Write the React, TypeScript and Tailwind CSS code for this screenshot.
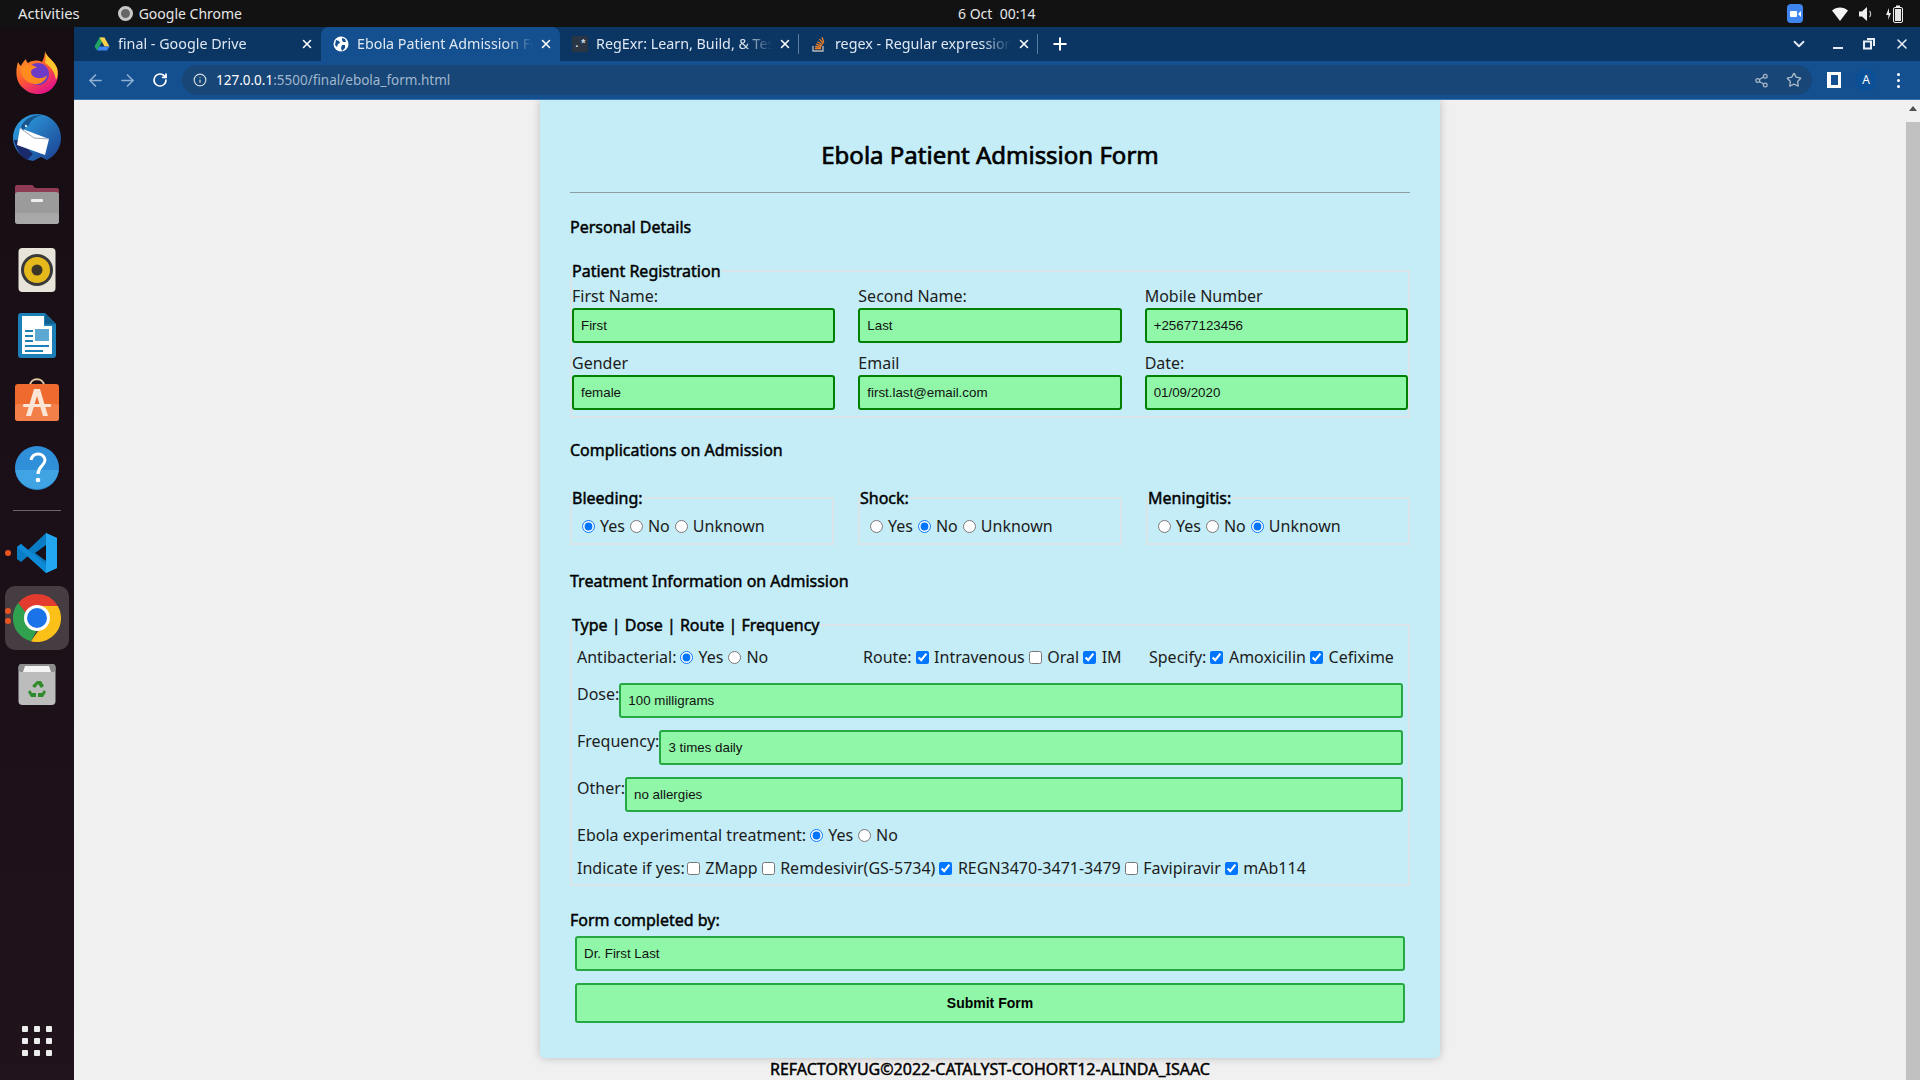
import React from "react";
import { ArrowLeft, ArrowRight, ChevronDown, Info, Plus, RotateCw, Share2, Star, X } from "lucide-react";

const greenInput =
  "box-border h-[35px] min-w-0 rounded-[3px] border-2 border-[#008000] bg-[#8ff7a7] px-[7px] font-['Liberation_Sans',sans-serif] text-[13.33px] text-[#111] outline-none";
const mintInput =
  "box-border h-[35px] min-w-0 flex-1 rounded-[3px] border-2 border-[#28a745] bg-[#8ff7a7] px-[7px] font-['Liberation_Sans',sans-serif] text-[13.33px] text-[#111] outline-none";
// the page's headings render as a thickened regular weight
const heading = "leading-[24px] text-black [-webkit-text-stroke:0.45px_#000]";

function Firefox() {
  return (
    <svg width="44" height="44" viewBox="0 0 44 44">
      <defs>
        <linearGradient id="ff" x1="0" y1="0" x2="0.6" y2="1">
          <stop offset="0" stopColor="#ffb020" />
          <stop offset="0.55" stopColor="#ff5a30" />
          <stop offset="1" stopColor="#e31587" />
        </linearGradient>
      </defs>
      <path d="M30 1c1 6 9 9 12 17 3 9-1 18-8 23-8 5-19 4-26-3C1 32 0 22 3 12c1 2 2 3 3 4 1-3 3-5 5-7 0 2 1 3 2 4 5-3 10-3 14-1 2-4 3-7 3-11z" fill="url(#ff)" />
      <path d="M30 1c1 6 9 9 12 17 1 4 1 8-1 12-1-8-5-13-11-17 1-4 1-8 0-12z" fill="#ffc52e" />
      <circle cx="23" cy="24" r="11" fill="#6e3bc6" />
      <path d="M6 17c5-4 12-3 16 1-4 0-6 2-6 4 0 4 5 7 10 6 3 0 5-2 6-3-1 6-7 10-13 9C11 33 4 25 6 17z" fill="#ff8a20" />
    </svg>
  );
}

function Thunderbird() {
  return (
    <svg width="48" height="48" viewBox="0 0 48 48">
      <defs>
        <linearGradient id="tb" x1="0" y1="0" x2="1" y2="1">
          <stop offset="0" stopColor="#2fa8e6" />
          <stop offset="1" stopColor="#1b3d8f" />
        </linearGradient>
      </defs>
      <path d="M24 0a24 24 0 0 1 24 24c0 10-6 18-14 22l-6-3-8 4C9 45 0 35 0 24 0 11 11 0 24 0z" fill="url(#tb)" />
      <path d="M1 26c2 10 8 17 13 20l6-6-14-14z" fill="#1a2a6c" />
      <path d="M7 14 L36 25 L32 41 L4 31 Z" fill="#ffffff" />
      <path d="M7 14 L21 24 L36 25" fill="none" stroke="#9aa6b8" strokeWidth="1" />
      <path d="M8 13c3-8 11-12 21-12-7 2-11 5-13 10l-6 5z" fill="#17558f" />
      <circle cx="13" cy="12" r="1.2" fill="#d7e6f5" />
    </svg>
  );
}

function Files() {
  return (
    <svg width="44" height="42" viewBox="0 0 44 42">
      <path d="M0 5a3 3 0 0 1 3-3h14l3 3h21a3 3 0 0 1 3 3v10H0z" fill="#b1433f" />
      <path d="M0 5a3 3 0 0 1 3-3h14l3 3h21a3 3 0 0 1 3 3v2H0z" fill="#8e3b54" />
      <rect x="0" y="9" width="44" height="32" rx="3" fill="#9b9b9b" />
      <rect x="0" y="30" width="44" height="11" rx="3" fill="#a8a8a8" />
      <rect x="16" y="16" width="12" height="3" rx="1" fill="#efefef" />
    </svg>
  );
}

function Rhythmbox() {
  return (
    <svg width="38" height="44" viewBox="0 0 38 44">
      <rect x="0.5" y="0" width="37" height="44" rx="4" fill="#e8e4da" />
      <circle cx="19" cy="22" r="16" fill="#3a3a3a" />
      <circle cx="19" cy="22" r="13" fill="#e5b81c" />
      <circle cx="19" cy="22" r="5.5" fill="#3c3628" />
    </svg>
  );
}

function Writer() {
  return (
    <svg width="38" height="46" viewBox="0 0 38 46">
      <path d="M3 0h24l11 11v31a3 3 0 0 1-3 3H3a3 3 0 0 1-3-3V3a3 3 0 0 1 3-3z" fill="#1d7fb8" />
      <path d="M4 3h22v10h8v28H4z" fill="#ffffff" />
      <path d="M27 0l11 11H27z" fill="#12608f" />
      <rect x="7" y="17" width="8" height="2" fill="#1d7fb8" />
      <rect x="7" y="22" width="8" height="2" fill="#1d7fb8" />
      <rect x="7" y="27" width="8" height="2" fill="#1d7fb8" />
      <rect x="17" y="16" width="14" height="12" fill="#5da7d3" />
      <rect x="7" y="32" width="24" height="2" fill="#1d7fb8" />
      <rect x="7" y="37" width="18" height="2" fill="#1d7fb8" />
    </svg>
  );
}

function AppStore() {
  return (
    <svg width="44" height="44" viewBox="0 0 44 44">
      <path d="M15 8c0-9 14-9 14 0" fill="none" stroke="#e7c9a4" strokeWidth="2" />
      <rect x="0" y="6" width="44" height="37" rx="3" fill="#ef6a2e" />
      <rect x="0" y="26" width="44" height="17" rx="3" fill="#f38048" />
      <path d="M19 11h6l8 27h-5l-6-20-6 20h-5z" fill="#fbe5d6" />
      <rect x="8" y="26" width="28" height="3" rx="1" fill="#fbe5d6" />
    </svg>
  );
}

function Help() {
  return (
    <svg width="44" height="44" viewBox="0 0 44 44">
      <circle cx="22" cy="22" r="22" fill="#2f8fd9" />
      <path d="M0.2 24h43.6A22 22 0 0 1 0.2 24z" fill="#3fa3e4" />
      <path d="M16 14c1-4 4-6 7-6 4 0 7 3 7 6 0 6-7 6-7 14" fill="none" stroke="#fff" strokeWidth="3" />
      <circle cx="23" cy="34" r="2.3" fill="#fff" />
    </svg>
  );
}

function VsCode() {
  return (
    <svg width="42" height="42" viewBox="0 0 42 42">
      <path d="M30 1 L41 6 V36 L30 41 L12 24 L5 30 L1 27 V15 L5 12 L12 18 Z" fill="#0a7cc4" />
      <path d="M30 1 L41 6 V36 L30 41 Z" fill="#22a7f0" />
      <path d="M1 15 L5 12 L30 33 V41 Z" fill="#0f8ad6" />
      <path d="M30 13 L19 21 L30 29 Z" fill="#171018" />
    </svg>
  );
}

function ChromeLogo({ size = 48 }: { size?: number }) {
  return (
    <svg width={size} height={size} viewBox="0 0 48 48">
      <path d="M24 0a24 24 0 0 1 20.8 12H24a12 12 0 0 0-11 7L5.2 9A24 24 0 0 1 24 0z" fill="#e33b2e" />
      <path d="M5.2 9 13 19a12 12 0 0 0 11 17l-6 11.3A24 24 0 0 1 5.2 9z" fill="#2fa14f" />
      <path d="M44.8 12A24 24 0 0 1 18 47.3L30 30a12 12 0 0 0-6-18z" fill="#fcc119" />
      <circle cx="24" cy="24" r="13" fill="#fff" />
      <circle cx="24" cy="24" r="10" fill="#1a73e8" />
    </svg>
  );
}

function Trash() {
  return (
    <svg width="38" height="42" viewBox="0 0 38 42">
      <rect x="0.5" y="0" width="37" height="41" rx="4" fill="#bcbcbc" />
      <rect x="0.5" y="0" width="37" height="8" rx="3" fill="#8d8d8d" />
      <path d="M5 8l2-6h24l2 6z" fill="#f4f4f4" />
      <path d="M19 17l4 0 3 5-3 2-3-4-3 4-3-2zM12 26l2 3h4v4h-5l-3-5zM26 26l2 2-3 5h-5v-4h4z" fill="#2f8a2a" />
    </svg>
  );
}

function DriveIcon() {
  return (
    <svg width="16" height="16" viewBox="0 0 16 16">
      <path d="M5.5 1.5h5L8 6 5.5 10.5 3 14.5 0.5 10.5z" fill="#1fa463" />
      <path d="M5.5 1.5h5l5 9h-5z" fill="#ffd04b" />
      <path d="M3 14.5l2.5-4h10l-2.5 4z" fill="#4285f4" />
    </svg>
  );
}

function GlobeIcon() {
  return (
    <svg width="16" height="16" viewBox="0 0 16 16">
      <circle cx="8" cy="8" r="7.5" fill="#fff" />
      <path d="M3 4l3 1 1 2-2 1-1 3-2-2zM9 2l3 1 1 3-3 0-1-2zM9 9l3 0 0 3-3 3-1-3z" fill="#14508f" />
    </svg>
  );
}

function RegexIcon() {
  return (
    <div className="flex h-[16px] w-[16px] items-center justify-center bg-[#2a3644] font-['Liberation_Mono',monospace] text-[11px] font-bold leading-none text-[#d5dde6]">
      .*
    </div>
  );
}

function StackIcon() {
  return (
    <svg width="16" height="16" viewBox="0 0 16 16">
      <path d="M2 10v5h10v-5" fill="none" stroke="#bcbbbb" strokeWidth="1.3" />
      <path d="M4 12.5h6M4.2 10.5l6 .6M5 8.2l5.8 1.6M6.3 5.8l5.2 3M8.5 3.2l3.8 4.4M11 1.2l1.8 5.4" stroke="#f48024" strokeWidth="1.3" fill="none" />
    </svg>
  );
}

type TabProps = {
  icon: React.ReactNode;
  title: string;
  active?: boolean;
  divider?: boolean;
};

function Tab({ icon, title, active, divider }: TabProps) {
  return (
    <div
      className={
        active
          ? "flex h-[34px] w-[239px] items-center rounded-t-[8px] bg-[#14508f] pl-[12px] pr-[7px]"
          : "relative flex h-[34px] w-[239px] items-center pl-[12px] pr-[7px]"
      }
    >
      <div className="flex h-[16px] w-[16px] shrink-0 items-center justify-center">{icon}</div>
      <div className="ml-[8px] min-w-0 flex-1 overflow-hidden whitespace-nowrap text-[14.3px] text-[#dfe8f2] [mask-image:linear-gradient(to_right,black_84%,transparent)]">
        {title}
      </div>
      <X size={14} strokeWidth={2.6} className="ml-[6px] shrink-0 text-white" />
      {divider && <div className="absolute right-0 top-[7px] h-[20px] w-px bg-[#5c7c9f]" />}
    </div>
  );
}

function Radio({ label, checked, name }: { label: string; checked?: boolean; name: string }) {
  return (
    <label className="flex items-center">
      <input type="radio" name={name} defaultChecked={checked} className="ml-[5px] mr-[5px]" />
      <span>{label}</span>
    </label>
  );
}

function Check({ label, checked }: { label: string; checked?: boolean }) {
  return (
    <label className="flex items-center">
      <input type="checkbox" defaultChecked={checked} className="ml-[4px] mr-[5.5px]" />
      <span>{label}</span>
    </label>
  );
}

function Field({ label, value }: { label: string; value: string }) {
  return (
    <div className="flex flex-col">
      <label className="leading-[23px]">{label}</label>
      <input readOnly defaultValue={value} className={greenInput} />
    </div>
  );
}

function Complication({ title, name, value }: { title: string; name: string; value: string }) {
  return (
    <fieldset className="border-2 border-[#d8e4e8] pb-[5px] pt-[4px]">
      <legend className={heading}>{title}</legend>
      <div className="flex h-[24px] items-center pl-[5px]">
        <Radio name={name} label="Yes" checked={value === "Yes"} />
        <Radio name={name} label="No" checked={value === "No"} />
        <Radio name={name} label="Unknown" checked={value === "Unknown"} />
      </div>
    </fieldset>
  );
}

function InlineField({ label, value }: { label: string; value: string }) {
  return (
    <div className="flex items-start">
      <label className="-mt-[1px] leading-[24px]">{label}</label>
      <input readOnly defaultValue={value} className={mintInput} />
    </div>
  );
}

export default function App() {
  return (
    <div className="flex h-screen w-full flex-col overflow-hidden bg-[#f0f0f0] font-['Noto_Sans',sans-serif] text-[16px] text-[#1c1c1c]">
      {/* gnome top bar */}
      <div className="relative flex h-[27px] shrink-0 items-center bg-[#121212] pl-[18px] pr-[16px] text-[14px] text-[#e6e6e6]">
        <span className="text-[14.8px]">Activities</span>
        <div className="ml-[38px] h-[15px] w-[15px] rounded-full border-[3px] border-[#c9c9c9] bg-[#666]" />
        <span className="ml-[6px]">Google Chrome</span>
        <span className="absolute left-[958px] top-[3px]">6 Oct&nbsp;&nbsp;00:14</span>
        <div className="ml-auto flex items-center">
          <div className="flex h-[19px] w-[16px] items-center justify-center gap-px rounded-[4px] bg-[#3f85f0]">
            <div className="h-[6px] w-[7px] rounded-[1px] bg-white" />
            <div className="h-0 w-0 border-y-[3px] border-r-[3px] border-y-transparent border-r-white" />
          </div>
          <svg width="16" height="14" viewBox="0 0 16 14" className="ml-[29px]">
            <path d="M0 3.5C4.5-.5 11.5-.5 16 3.5L8 14z" fill="#f4f4f4" />
          </svg>
          <svg width="16" height="16" viewBox="0 0 16 16" className="ml-[10px]" fill="none">
            <path d="M1 5.5h3L9 1v14l-5-4.500H1z" fill="#ededed" />
            <path d="M11.500 5c1.500 1.500 1.500 4.500 0 6" stroke="#bdbdbd" strokeWidth="1.200" />
          </svg>
          <svg width="18" height="18" viewBox="0 0 18 18" className="ml-[12px]">
            <path d="M3 3L0 10h2.500L2 15l3-7H3z" fill="#eee" />
            <rect x="7.500" y="2.500" width="9" height="15" rx="1.500" fill="none" stroke="#eee" />
            <rect x="10" y="0.500" width="4" height="2" fill="#eee" />
            <rect x="9" y="4" width="6" height="12" fill="#e4e4e4" />
          </svg>
        </div>
      </div>

      <div className="flex min-h-0 flex-1">
        {/* dock */}
        <div className="relative flex w-[74px] shrink-0 flex-col items-center bg-gradient-to-b from-[#160d13] to-[#21131c] pt-[12px]">
          <div className="flex h-[66px] items-center justify-center"><Firefox /></div>
          <div className="flex h-[66px] items-center justify-center"><Thunderbird /></div>
          <div className="flex h-[66px] items-center justify-center"><Files /></div>
          <div className="flex h-[66px] items-center justify-center"><Rhythmbox /></div>
          <div className="flex h-[66px] items-center justify-center"><Writer /></div>
          <div className="flex h-[66px] items-center justify-center pb-[4px]"><AppStore /></div>
          <div className="flex h-[66px] items-center justify-center"><Help /></div>
          <div className="mt-[9px] h-px w-[48px] bg-[#6b6468]" />
          <div className="relative mt-[9px] flex h-[66px] w-full items-center justify-center">
            <div className="absolute left-[5px] top-[30px] h-[6px] w-[6px] rounded-full bg-[#e95420]" />
            <VsCode />
          </div>
          <div className="relative flex h-[64px] w-[64px] items-center justify-center rounded-[10px] bg-[#453d42]">
            <div className="absolute left-0 top-[22px] h-[6px] w-[6px] rounded-full bg-[#e95420]" />
            <div className="absolute left-0 top-[32px] h-[6px] w-[6px] rounded-full bg-[#e95420]" />
            <ChromeLogo />
          </div>
          <div className="mt-[2px] flex h-[66px] items-center justify-center"><Trash /></div>
          <div className="mt-auto mb-[24px] grid grid-cols-3 gap-x-[6px] gap-y-[6px]">
            {[1, 2, 3, 4, 5, 6, 7, 8, 9].map((n) => (
              <div key={n} className="h-[6px] w-[6px] rounded-[1px] bg-[#eeeeee]" />
            ))}
          </div>
        </div>

        <div className="flex min-w-0 flex-1 flex-col">
          {/* tab strip */}
          <div className="flex h-[34px] shrink-0 items-center bg-[#0b3563] pl-[8px]">
            <Tab icon={<DriveIcon />} title="final - Google Drive" />
            <Tab icon={<GlobeIcon />} title="Ebola Patient Admission Form" active />
            <Tab icon={<RegexIcon />} title="RegExr: Learn, Build, & Test RegEx" divider />
            <Tab icon={<StackIcon />} title="regex - Regular expression to match" divider />
            <Plus size={20} strokeWidth={2.4} className="ml-[12px] text-white" />
            <ChevronDown size={18} strokeWidth={2.4} className="ml-[720px] text-[#e6edf5]" />
            <div className="ml-[25px] mt-[8px] h-[2px] w-[10px] bg-[#e6edf5]" />
            <svg width="12" height="12" viewBox="0 0 12 12" className="ml-[20px]" fill="none" stroke="#e6edf5" strokeWidth="2">
              <rect x="1" y="3.500" width="7" height="7" />
              <path d="M4 1h7v7" />
            </svg>
            <X size={16} strokeWidth={2.4} className="ml-[19px] text-[#e6edf5]" />
          </div>

          {/* toolbar */}
          <div className="flex h-[39px] shrink-0 items-center border-b border-[#3b75ad] bg-[#14508f] pl-[12px] text-[#8fb0d2]">
            <ArrowLeft size={19} strokeWidth={2} />
            <ArrowRight size={19} strokeWidth={2} className="ml-[13px]" />
            <RotateCw size={16} strokeWidth={2.6} className="ml-[15px] text-white" />
            <div className="ml-[14px] flex h-[30px] w-[1630px] items-center rounded-full bg-[#184677] pl-[11px]">
              <Info size={14} className="text-[#d2dce6]" />
              <span className="ml-[9px] text-[13.5px] text-[#9fb6cd]">
                <span className="text-white">127.0.0.1</span>:5500/final/ebola_form.html
              </span>
              <Share2 size={15} className="ml-auto text-[#a8b8c8]" />
              <Star size={16} strokeWidth={2} className="ml-[17px] mr-[10px] text-[#a8b8c8]" />
            </div>
            <div className="ml-[15px] flex h-[16px] w-[14px] items-center justify-end border-[3px] border-white bg-white">
              <div className="h-full w-[7px] bg-[#14508f]" />
            </div>
            <div className="ml-[14px] flex h-[22px] w-[22px] items-center justify-center rounded-full bg-[#0b4f96] text-[12px] text-white">
              A
            </div>
            <div className="ml-[20px] flex flex-col gap-[3px]">
              <div className="h-[3px] w-[3px] rounded-full bg-white" />
              <div className="h-[3px] w-[3px] rounded-full bg-white" />
              <div className="h-[3px] w-[3px] rounded-full bg-white" />
            </div>
          </div>

          {/* page */}
          <div className="flex min-h-0 flex-1">
            <div className="min-w-0 flex-1 overflow-hidden">
              <div className="mx-auto box-border w-[900px] rounded-b-[5px] bg-[#c4edf7] px-[30px] pb-[35px] pt-[37px] shadow-[0_0_8px_rgba(0,0,0,0.22)]">
                <h1 className="text-center text-[24px] leading-[36px] text-black [-webkit-text-stroke:0.7px_#000]">
                  Ebola Patient Admission Form
                </h1>
                <hr className="mt-[19px] border-t border-[#8c9ca3]" />
                <h3 className={`mt-[22px] ${heading}`}>Personal Details</h3>

                <fieldset className="mt-[20px] border-2 border-[#d8e4e8] pb-[6px] pt-[2px]">
                  <legend className={heading}>Patient Registration</legend>
                  <div className="grid grid-cols-3 gap-x-[23px] gap-y-[9px]">
                    <Field label="First Name:" value="First" />
                    <Field label="Second Name:" value="Last" />
                    <Field label="Mobile Number" value="+25677123456" />
                    <Field label="Gender" value="female" />
                    <Field label="Email" value="first.last@email.com" />
                    <Field label="Date:" value="01/09/2020" />
                  </div>
                </fieldset>

                <h3 className={`mt-[20px] ${heading}`}>Complications on Admission</h3>
                <div className="mt-[24px] grid grid-cols-3 gap-x-[24px]">
                  <Complication title="Bleeding:" name="bleeding" value="Yes" />
                  <Complication title="Shock:" name="shock" value="No" />
                  <Complication title="Meningitis:" name="meningitis" value="Unknown" />
                </div>

                <h3 className={`mt-[24px] ${heading}`}>Treatment Information on Admission</h3>
                <fieldset className="mt-[20px] border-2 border-[#d8e4e8] pb-[4px] pt-[8px]">
                  <legend className={heading}>Type | Dose | Route | Frequency</legend>
                  <div className="px-[5px]">
                    <div className="grid h-[24px] grid-cols-[286px_286px_1fr] items-center">
                      <div className="flex items-center">
                        <span className="mr-[-1px]">Antibacterial:</span>
                        <Radio name="anti" label="Yes" checked />
                        <Radio name="anti" label="No" />
                      </div>
                      <div className="flex items-center">
                        <span>Route:</span>
                        <Check label="Intravenous" checked />
                        <Check label="Oral" />
                        <Check label="IM" checked />
                      </div>
                      <div className="flex items-center whitespace-nowrap">
                        <span>Specify:</span>
                        <Check label="Amoxicilin" checked />
                        <Check label="Cefixime" checked />
                      </div>
                    </div>
                    <div className="mt-[14px] flex flex-col gap-y-[12px]">
                      <InlineField label="Dose:" value="100 milligrams" />
                      <InlineField label="Frequency:" value="3 times daily" />
                      <InlineField label="Other:" value="no allergies" />
                    </div>
                    <div className="mt-[11px] flex h-[24px] items-center">
                      <span className="mr-[-1px]">Ebola experimental treatment:</span>
                      <Radio name="ebola" label="Yes" checked />
                      <Radio name="ebola" label="No" />
                    </div>
                    <div className="mt-[9px] flex h-[24px] items-center">
                      <span className="mr-[-2px]">Indicate if yes:</span>
                      <Check label="ZMapp" />
                      <Check label="Remdesivir(GS-5734)" />
                      <Check label="REGN3470-3471-3479" checked />
                      <Check label="Favipiravir" />
                      <Check label="mAb114" checked />
                    </div>
                  </div>
                </fieldset>

                <h3 className={`mt-[22px] ${heading}`}>Form completed by:</h3>
                <div className="mx-[5px] mt-[4px] flex">
                  <input readOnly defaultValue="Dr. First Last" className={mintInput} />
                </div>
                <button className="mx-[5px] mt-[12px] box-border h-[40px] w-[830px] rounded-[3px] border-2 border-[#28a745] bg-[#8ff7a7] font-['Liberation_Sans',sans-serif] text-[14px] font-bold text-black">
                  Submit Form
                </button>
              </div>
              <div className="text-center leading-[22px] text-black [-webkit-text-stroke:0.45px_#000]">
                REFACTORYUG©2022-CATALYST-COHORT12-ALINDA_ISAAC
              </div>
            </div>
            {/* scrollbar */}
            <div className="flex w-[14px] shrink-0 flex-col items-center bg-[#f1f1f1]">
              <div className="mt-[6px] h-0 w-0 border-x-[4px] border-b-[5px] border-x-transparent border-b-[#505050]" />
              <div className="mt-[11px] w-full flex-1 bg-[#c1c1c1]" />
            </div>
          </div>
        </div>
      </div>
    </div>
  );
}
